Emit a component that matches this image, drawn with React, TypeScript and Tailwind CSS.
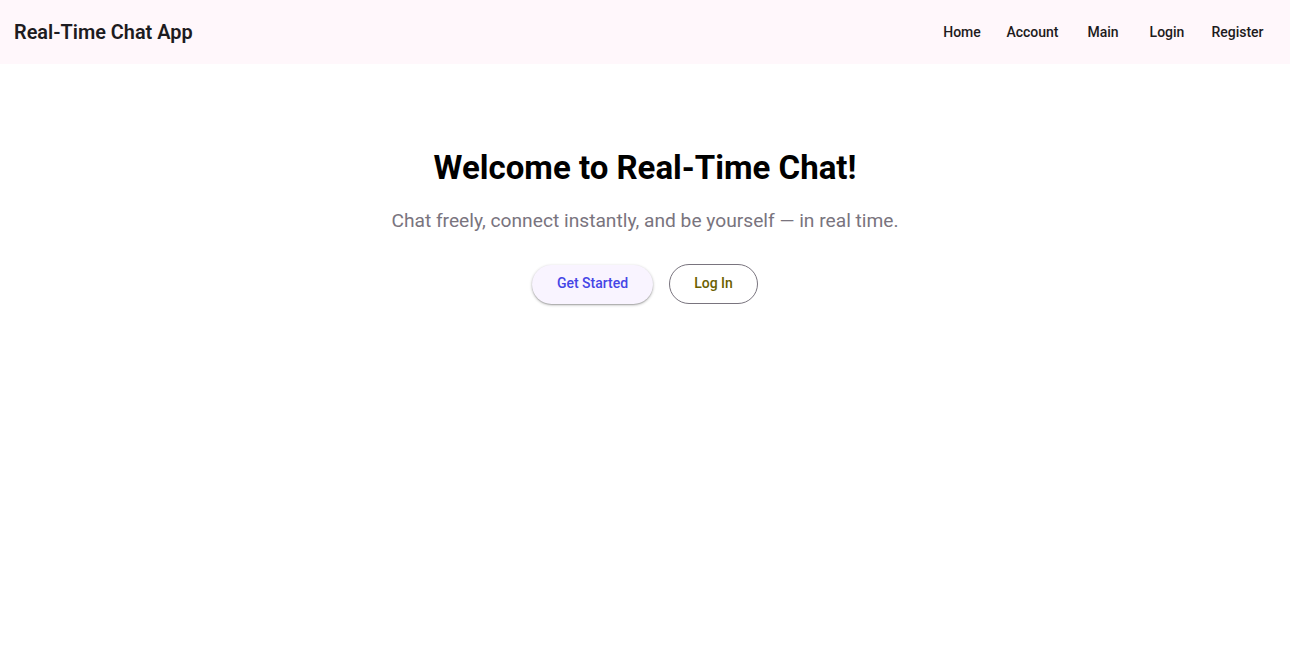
import React from "react";

const font = { fontFamily: "Roboto, 'Liberation Sans', sans-serif" };

export default function App() {
  return (
    <div className="min-h-[651px] bg-white text-[#1d1b20]" style={font}>
      <header className="h-16 bg-[#fff7fb] flex items-center justify-between pl-[14px] pr-[18px]">
        <div className="pt-[2px] text-[19.9px] font-semibold leading-none text-[#1d1b20]">Real-Time Chat App</div>
        <nav className="flex items-center text-[14px] font-medium text-[#1d1b20]">
          <a className="w-16 h-9 flex items-center justify-center">Home</a>
          <a className="ml-[6px] w-[65px] h-9 flex items-center justify-center">Account</a>
          <a className="ml-[6px] w-16 h-9 flex items-center justify-center">Main</a>
          <a className="w-16 h-9 flex items-center justify-center">Login</a>
          <a className="ml-[4px] w-[69px] h-9 flex items-center justify-center">Register</a>
        </nav>
      </header>
      <main className="flex flex-col items-center pt-[84px]">
        <h1 className="text-[33px] font-bold leading-[40px] text-black">Welcome to Real-Time Chat!</h1>
        <p className="mt-[19px] text-[19.2px] leading-[28px] text-[#79747e]">
          Chat freely, connect instantly, and be yourself — in real time.
        </p>
        <div className="mt-[29px] flex items-center gap-4">
          <button className="w-[121px] h-[39px] pb-[1px] rounded-full bg-[#f9f4ff] text-[#4545e6] text-[14px] font-medium shadow-[0_1px_3px_rgba(0,0,0,0.3),0_1px_1px_rgba(0,0,0,0.15)]">
            Get Started
          </button>
          <button className="w-[89px] h-[40px] pb-[1px] rounded-full border border-[#79747e] text-[#6b5f00] text-[14px] font-medium">
            Log In
          </button>
        </div>
      </main>
    </div>
  );
}
